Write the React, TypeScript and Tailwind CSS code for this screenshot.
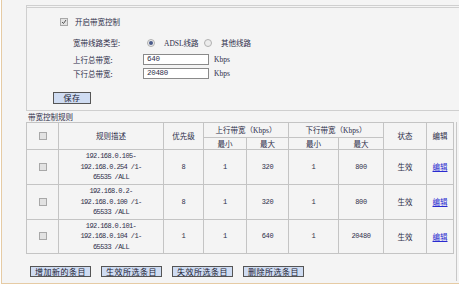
import React from "react";

const cjk = "font-['Noto_Sans_CJK_SC','Noto_Sans',sans-serif]";
const mono = "font-['Liberation_Mono',monospace]";

const rules = [
  { ip: ["192.168.0.105-", "192.168.0.254 /1-", "65535 /ALL"], prio: 8, upMin: 1, upMax: 320, downMin: 1, downMax: 800, h: "h-[35px]" },
  { ip: ["192.168.0.2-", "192.168.0.100 /1-", "65533 /ALL"], prio: 8, upMin: 1, upMax: 320, downMin: 1, downMax: 800, h: "h-[35px]" },
  { ip: ["192.168.0.101-", "192.168.0.104 /1-", "65533 /ALL"], prio: 1, upMin: 1, upMax: 640, downMin: 1, downMax: 20480, h: "h-[34px]" },
];

function Box({ checked = false }: { checked?: boolean }) {
  return (
    <span className="inline-flex h-[8px] w-[8px] items-center justify-center border border-[#a8a8a8] bg-[#e2e2e2]">
      {checked && (
        <svg width="6" height="6" viewBox="0 0 6 6">
          <path d="M1 3 L2.5 4.5 L5 1" stroke="#555" strokeWidth="1" fill="none" />
        </svg>
      )}
    </span>
  );
}

function Radio({ on = false }: { on?: boolean }) {
  return (
    <span className="inline-flex h-[8px] w-[8px] items-center justify-center rounded-full border border-[#b0b0b0] bg-[#ececec]">
      {on && <span className="h-[4px] w-[4px] rounded-full bg-[#4a5a8a]" />}
    </span>
  );
}

function Btn({ label, w }: { label: string; w: string }) {
  return (
    <button
      className={`flex h-[11px] ${w} items-center justify-center border border-[#555] bg-[#cfdcf2] text-[8px] leading-none tracking-[0.5px] text-[#223]`}>
      {label}
    </button>
  );
}

export default function App() {
  const cell = "border border-[#c4c4c4] text-center align-middle p-0";
  const num = `${cell} ${mono} text-[7px] tracking-[-0.4px]`;
  return (
    <div className={`h-[287px] w-[459px] overflow-hidden bg-white ${cjk} text-[7.5px] leading-none text-[#2e2e4a]`}>
      <div className="ml-px h-[284px] w-[458px] border-b border-l border-[#e6cba4] bg-[#f4f4f4] pt-[5px]">
        {/* bandwidth switch box */}
        <div className="ml-[24px] h-[106px] border-b border-l border-t-[3px] border-double border-[#cfcfcf]">
          <div className="mt-[10px] flex h-[7px] items-center gap-[7px] pl-[33px]">
            <Box checked />
            <span>开启带宽控制</span>
          </div>
          <div className="mt-[13px] flex h-[10px] items-center pl-[46px]">
            <span className="w-[74px]">宽带线路类型:</span>
            <Radio on />
            <span className="ml-[9px] w-[40px] font-['Liberation_Serif','Noto_Sans_CJK_SC',serif] text-[7.5px]">ADSL<span className={cjk}>线路</span></span>
            <Radio />
            <span className="ml-[9px]">其他线路</span>
          </div>
          <div className="mt-[6px] flex h-[11px] items-center pl-[46px]">
            <span className="w-[70px]">上行总带宽:</span>
            <span className={`flex h-[11px] w-[66px] items-center border border-[#8a8a8a] bg-white pl-[3px] ${mono} text-[7.5px] tracking-[-0.3px]`}>640</span>
            <span className="ml-[5px] font-['Liberation_Serif',serif] text-[7.5px]">Kbps</span>
          </div>
          <div className="mt-[3px] flex h-[11px] items-center pl-[46px]">
            <span className="w-[70px]">下行总带宽:</span>
            <span className={`flex h-[11px] w-[66px] items-center border border-[#8a8a8a] bg-white pl-[3px] ${mono} text-[7.5px] tracking-[-0.3px]`}>20480</span>
            <span className="ml-[5px] font-['Liberation_Serif',serif] text-[7.5px]">Kbps</span>
          </div>
          <div className="ml-[26px] mt-[13px]">
            <Btn label="保存" w="w-[38px] h-[12px]" />
          </div>
        </div>

        <div className="ml-[26px] flex h-[11px] items-center">带宽控制规则</div>

        {/* rules table */}
        <div className="ml-[24px] h-[159px] w-[431px] border-r border-[#c8c8c8]">
          <table className="w-[427px] table-fixed border-collapse">
            <colgroup>
              <col className="w-[32px]" />
              <col className="w-[105px]" />
              <col className="w-[40px]" />
              <col className="w-[43px]" />
              <col className="w-[42px]" />
              <col className="w-[50px]" />
              <col className="w-[45px]" />
              <col className="w-[43px]" />
              <col className="w-[27px]" />
            </colgroup>
            <thead>
              <tr className="h-[15px]">
                <td rowSpan={2} className={cell}><Box /></td>
                <td rowSpan={2} className={cell}>规则描述</td>
                <td rowSpan={2} className={cell}>优先级</td>
                <td colSpan={2} className={cell}>上行带宽（<span className="font-['Liberation_Serif',serif]">Kbps</span>）</td>
                <td colSpan={2} className={cell}>下行带宽（<span className="font-['Liberation_Serif',serif]">Kbps</span>）</td>
                <td rowSpan={2} className={cell}>状态</td>
                <td rowSpan={2} className={cell}>编辑</td>
              </tr>
              <tr className="h-[12px]">
                <td className={cell}>最小</td>
                <td className={cell}>最大</td>
                <td className={cell}>最小</td>
                <td className={cell}>最大</td>
              </tr>
            </thead>
            <tbody>
              {rules.map((r, i) => (
                <tr key={i} className={r.h}>
                  <td className={cell}><Box /></td>
                  <td className={`${cell} ${mono} text-[7px] leading-[10.5px] tracking-[-0.6px]`}>
                    {r.ip.map((l) => (
                      <div key={l}>{l}</div>
                    ))}
                  </td>
                  <td className={num}>{r.prio}</td>
                  <td className={num}>{r.upMin}</td>
                  <td className={num}>{r.upMax}</td>
                  <td className={num}>{r.downMin}</td>
                  <td className={num}>{r.downMax}</td>
                  <td className={cell}>生效</td>
                  <td className={cell}>
                    <a className="text-[#2a2ad0] underline">编辑</a>
                  </td>
                </tr>
              ))}
            </tbody>
          </table>

          <div className="ml-[4px] mt-[12px] flex gap-[10px]">
            <Btn label="增加新的条目" w="w-[61px]" />
            <Btn label="生效所选条目" w="w-[61px]" />
            <Btn label="失效所选条目" w="w-[61px]" />
            <Btn label="删除所选条目" w="w-[61px]" />
          </div>
        </div>
      </div>
    </div>
  );
}
